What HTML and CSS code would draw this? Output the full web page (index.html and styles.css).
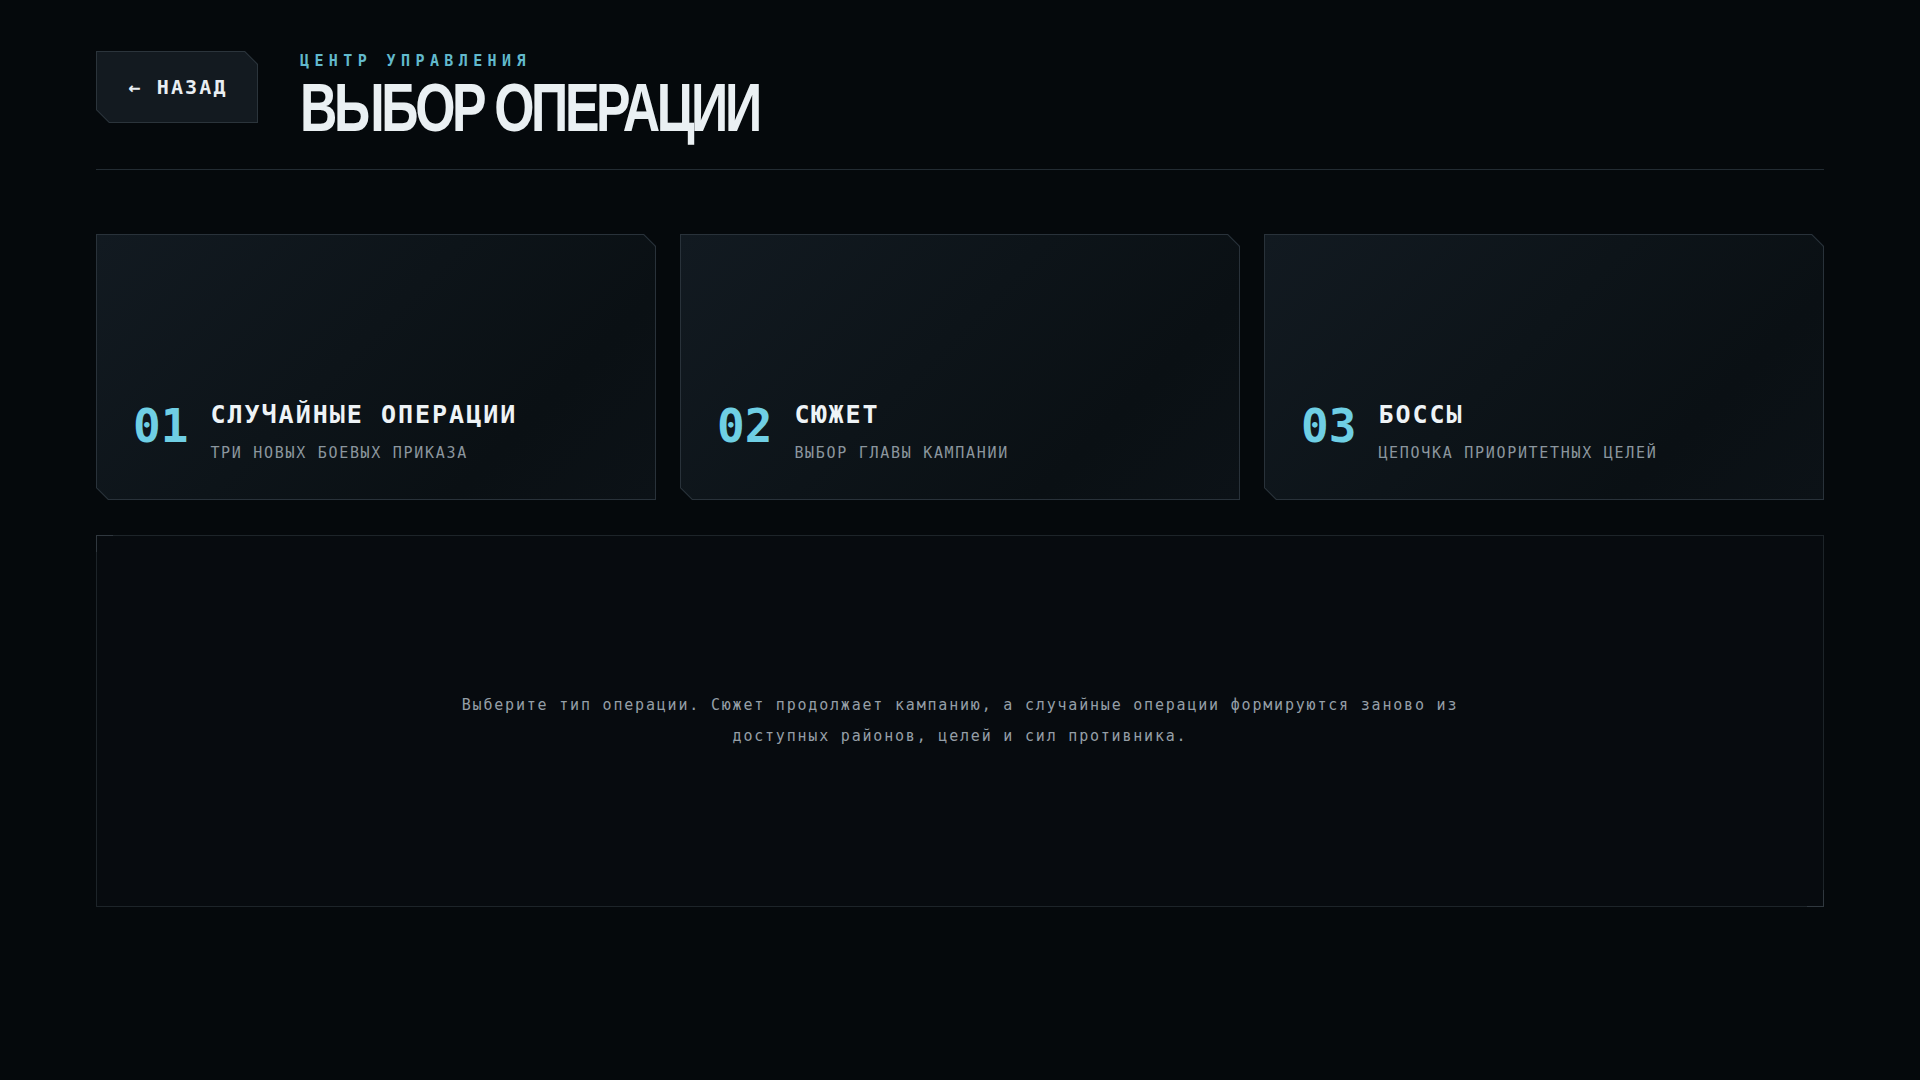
FILE: index.html
```html
<!DOCTYPE html>
<html lang="ru">
<head>
<meta charset="utf-8">
<title>Выбор операции</title>
<link rel="stylesheet" href="styles.css">
</head>
<body>
<div class="screen">
  <header class="top">
    <button class="back" type="button"><span class="back-inner">← НАЗАД</span></button>
    <div class="heading">
      <div class="eyebrow">ЦЕНТР УПРАВЛЕНИЯ</div>
      <h1 class="title">ВЫБОР ОПЕРАЦИИ</h1>
    </div>
  </header>

  <section class="modes">
    <div class="mode">
      <div class="mode-inner">
        <span class="num">01</span>
        <div class="text">
          <div class="name">СЛУЧАЙНЫЕ ОПЕРАЦИИ</div>
          <div class="desc">ТРИ НОВЫХ БОЕВЫХ ПРИКАЗА</div>
        </div>
      </div>
    </div>
    <div class="mode">
      <div class="mode-inner">
        <span class="num">02</span>
        <div class="text">
          <div class="name">СЮЖЕТ</div>
          <div class="desc">ВЫБОР ГЛАВЫ КАМПАНИИ</div>
        </div>
      </div>
    </div>
    <div class="mode">
      <div class="mode-inner">
        <span class="num">03</span>
        <div class="text">
          <div class="name">БОССЫ</div>
          <div class="desc">ЦЕПОЧКА ПРИОРИТЕТНЫХ ЦЕЛЕЙ</div>
        </div>
      </div>
    </div>
  </section>

  <section class="panel">
    <p class="hint">Выберите тип операции. Сюжет продолжает кампанию, а случайные операции формируются заново из доступных районов, целей и сил противника.</p>
  </section>
</div>
</body>
</html>
```

FILE: styles.css
```css
* { box-sizing: border-box; }

html, body {
  margin: 0;
  padding: 0;
  background: #05090c;
}

body {
  width: 1920px;
  height: 1080px;
  overflow: hidden;
  font-family: "DejaVu Sans Mono", "Liberation Mono", monospace;
  color: #e8eef2;
}

.screen {
  padding: 51px 96px 0;
}

/* ---------- header ---------- */
.top {
  display: flex;
  align-items: flex-start;
  gap: 42px;
  padding-bottom: 27px;
  border-bottom: 1px solid #232c33;
}

.back {
  display: block;
  width: 162px;
  height: 72px;
  padding: 1px;
  border: 0;
  background: #2b343b;
  cursor: pointer;
  clip-path: polygon(0 0, calc(100% - 13px) 0, 100% 13px, 100% 100%, 13px 100%, 0 calc(100% - 13px));
}

.back-inner {
  display: flex;
  align-items: center;
  justify-content: center;
  width: 100%;
  height: 100%;
  background: #131a20;
  clip-path: polygon(0 0, calc(100% - 12.5px) 0, 100% 12.5px, 100% 100%, 12.5px 100%, 0 calc(100% - 12.5px));
  font-family: "DejaVu Sans Mono", monospace;
  font-weight: 700;
  font-size: 20px;
  letter-spacing: 2.2px;
  color: #e9eef2;
  padding-left: 2px;
}

.heading {
  margin-top: 0;
}

.eyebrow {
  font-family: "DejaVu Sans Mono", monospace;
  font-weight: 700;
  font-size: 15px;
  line-height: 20px;
  letter-spacing: 0.36em;
  color: #62b9cc;
}

.title {
  margin: 2px 0 0;
  font-family: "Liberation Sans", Arial, sans-serif;
  font-weight: 700;
  font-size: 69px;
  line-height: 69px;
  letter-spacing: -0.065em;
  color: #eaf0f3;
  transform: scaleX(0.75);
  transform-origin: left center;
  white-space: nowrap;
}

/* ---------- mode cards ---------- */
.modes {
  display: grid;
  grid-template-columns: repeat(3, 1fr);
  gap: 24px;
  margin-top: 64px;
}

.mode {
  height: 266px;
  padding: 1px;
  background: #29323a;
  clip-path: polygon(0 0, calc(100% - 12px) 0, 100% 12px, 100% 100%, 12px 100%, 0 calc(100% - 12px));
}

.mode-inner {
  display: flex;
  align-items: flex-start;
  align-content: flex-end;
  flex-wrap: wrap;
  gap: 22px;
  height: 100%;
  padding: 0 36px 37px;
  background: linear-gradient(135deg, #121a21 0%, #0d1419 45%, #0a1014 75%, #0c1217 100%);
  clip-path: polygon(0 0, calc(100% - 11.5px) 0, 100% 11.5px, 100% 100%, 11.5px 100%, 0 calc(100% - 11.5px));
}

.num {
  margin-top: 2px;
  font-family: "DejaVu Sans Mono", monospace;
  font-weight: 700;
  font-size: 46px;
  line-height: 46px;
  font-variant-numeric: slashed-zero;
  color: #6fcfe4;
}

.name {
  font-family: "DejaVu Sans Mono", monospace;
  font-weight: 700;
  font-size: 25px;
  line-height: 28px;
  letter-spacing: 2px;
  color: #eef3f6;
}

.desc {
  margin-top: 15px;
  font-family: "DejaVu Sans Mono", monospace;
  font-size: 15px;
  line-height: 18px;
  letter-spacing: 1.7px;
  color: #8b969e;
}

/* ---------- info panel ---------- */
.panel {
  position: relative;
  display: flex;
  align-items: center;
  justify-content: center;
  height: 372px;
  margin-top: 35px;
  border: 1px solid #1d2429;
  background: #070b0f;
}

.panel::before,
.panel::after {
  content: "";
  position: absolute;
  width: 16px;
  height: 16px;
  pointer-events: none;
}

.panel::before {
  top: -1px;
  left: -1px;
  border-top: 1px solid #30383f;
  border-left: 1px solid #30383f;
}

.panel::after {
  right: -1px;
  bottom: -1px;
  border-right: 1px solid #30383f;
  border-bottom: 1px solid #30383f;
}

.hint {
  margin: 0;
  max-width: 1040px;
  text-align: center;
  font-family: "DejaVu Sans Mono", monospace;
  font-size: 15px;
  line-height: 31px;
  letter-spacing: 1.8px;
  color: #959fa7;
}
```
